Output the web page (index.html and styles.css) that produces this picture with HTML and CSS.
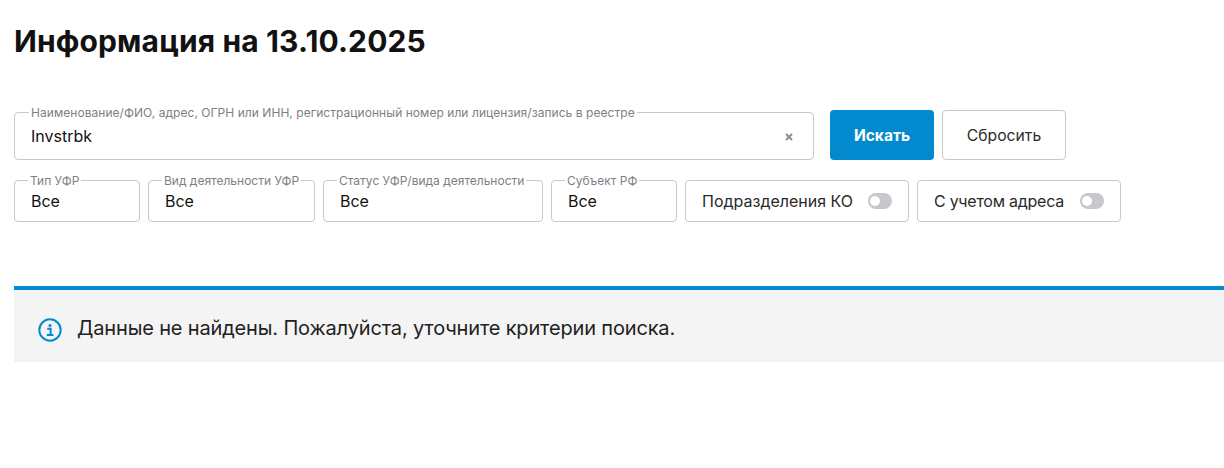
FILE: index.html
```html
<!DOCTYPE html>
<html lang="ru">
<head>
<meta charset="utf-8">
<title>Информация</title>
<link rel="stylesheet" href="styles.css">
</head>
<body>
<main class="page">
  <h1 class="title">Информация на 13.10.2025</h1>
  <form class="filters">
    <div class="row row-search">
      <fieldset class="field field-search">
        <legend class="legend">Наименование/ФИО, адрес, ОГРН или ИНН, регистрационный номер или лицензия/запись в реестре</legend>
        <span class="value">Invstrbk</span>
        <svg class="clear" width="8" height="8" viewBox="0 0 8 8"><path d="M1 1l6 6M7 1L1 7" stroke="#8a8f99" stroke-width="2"/></svg>
      </fieldset>
      <button type="button" class="btn btn-primary">Искать</button>
      <button type="button" class="btn btn-secondary">Сбросить</button>
    </div>
    <div class="row row-options">
      <fieldset class="field w-type"><legend class="legend">Тип УФР</legend><span class="value">Все</span></fieldset>
      <fieldset class="field w-kind"><legend class="legend">Вид деятельности УФР</legend><span class="value">Все</span></fieldset>
      <fieldset class="field w-status"><legend class="legend">Статус УФР/вида деятельности</legend><span class="value">Все</span></fieldset>
      <fieldset class="field w-subject"><legend class="legend">Субъект РФ</legend><span class="value">Все</span></fieldset>
      <div class="toggle-box w-dept"><span class="toggle-label">Подразделения КО</span><span class="switch"></span></div>
      <div class="toggle-box w-addr"><span class="toggle-label">С учетом адреса</span><span class="switch"></span></div>
    </div>
  </form>
  <section class="notice">
    <svg class="notice-icon" width="24" height="24" viewBox="0 0 24 24" fill="none">
      <circle cx="12" cy="12" r="10.7" stroke="#0389ce" stroke-width="2"/>
      <circle cx="12" cy="7.6" r="1.5" fill="#0389ce"/>
      <path d="M9.2 10.8H12.6V16.6M8.8 17H15.4" stroke="#0389ce" stroke-width="2"/>
    </svg>
    <p class="notice-text">Данные не найдены. Пожалуйста, уточните критерии поиска.</p>
  </section>
</main>
</body>
</html>
```
FILE: styles.css
```css
* { box-sizing: border-box; }
html, body { margin: 0; padding: 0; background: #fff; }
body { font-family: Inter, "Noto Sans", sans-serif; color: #1a1a1a; }
.page { padding: 22px 0 0 14px; height: 468px; overflow: hidden; }
.title { margin: 0 0 50px; font-size: 30px; line-height: 38px; font-weight: 700; color: #121212; letter-spacing: 0.13px; }
.row { display: flex; gap: 8px; }
.row-search { align-items: flex-end; height: 50px; }
.row-options { margin-top: 20px; height: 42px; }
.field {
  position: relative; margin: 0; min-width: 0;
  padding: 0 0 0 16px;
  border: 1px solid #c6c8cc; border-radius: 4px;
  display: flex; align-items: center;
}
.row-search .field { height: 48px; }
.row-options .field { height: 42px; margin-top: 0; }
.legend {
  padding: 0 2px; margin-left: -3px;
  font-size: 12px; line-height: 0; color: #7c7f85; white-space: nowrap;
}
.field-search .legend { margin-left: -2px; letter-spacing: 0.05px; }
.value { font-size: 16px; line-height: 20px; color: #121212; }
.field-search { width: 800px; margin-right: 8px; }
.clear { position: absolute; right: 20px; top: 20px; }
.btn { height: 50px; border-radius: 4px; font: inherit; font-size: 15.5px; cursor: pointer; }
.btn-primary { width: 104px; background: #0389ce; border: 0; color: #fff; font-weight: 700; }
.btn-secondary { width: 124px; background: #fff; border: 1px solid #c6c8cc; color: #2a2a2a; font-size: 15.7px; }
.w-type { width: 126px; }
.w-kind { width: 167px; }
.w-status { width: 220px; }
.w-subject { width: 126px; }
.toggle-box {
  display: flex; align-items: center; justify-content: space-between;
  height: 42px; padding: 0 16px;
  border: 1px solid #c6c8cc; border-radius: 4px;
}
.w-dept { width: 224px; }
.w-addr { width: 204px; }
.toggle-label { font-size: 16px; color: #2a2a2a; white-space: nowrap; }
.w-addr .toggle-label { letter-spacing: -0.25px; }
.switch { position: relative; width: 24px; height: 16px; border-radius: 8px; background: #c6c8cc; flex: none; }
.switch::after { content: ""; position: absolute; left: 2px; top: 3px; width: 10px; height: 10px; border-radius: 50%; background: #fff; }
.notice {
  margin-top: 64px; height: 76px; padding: 4px 0 0 24px;
  display: flex; align-items: center; gap: 15px;
  background: #f4f4f4; border-top: 4px solid #0389ce;
}
.notice-icon { flex: none; margin-top: 4px; }
.notice-text { margin: 0; font-size: 20px; line-height: 26px; color: #222; letter-spacing: -0.16px; }
```
